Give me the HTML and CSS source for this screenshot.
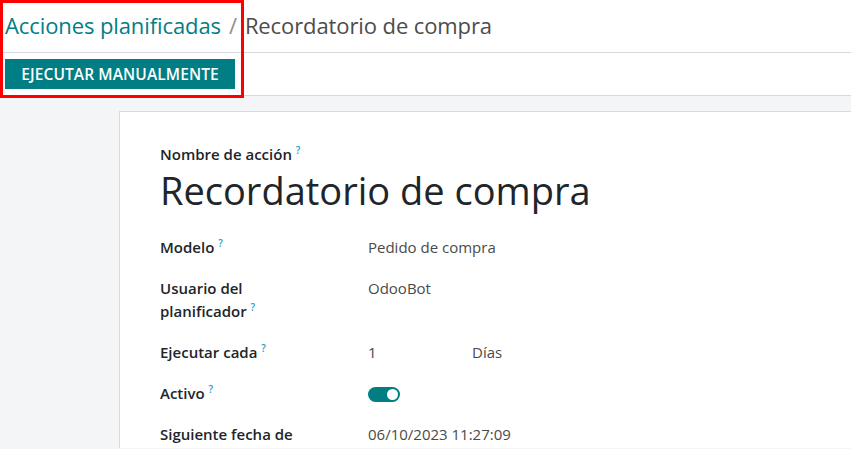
FILE: index.html
```html
<!DOCTYPE html>
<html lang="es">
<head>
    <meta charset="UTF-8">
    <title>Recordatorio de compra</title>
    <link rel="stylesheet" href="styles.css">
</head>
<body>

<div class="control-panel">
    <div class="breadcrumb">
        <a class="crumb-link" href="#">Acciones planificadas</a>
        <span class="crumb-sep">/</span>
        <span class="crumb-current">Recordatorio de compra</span>
    </div>
    <div class="cp-buttons">
        <button class="btn-run">EJECUTAR MANUALMENTE</button>
    </div>
    <!-- marco rojo de resaltado -->
    <div class="highlight"></div>
</div>

<div class="form-view">
    <div class="sheet">
        <div class="name-label">Nombre de acción <sup class="help">?</sup></div>
        <h1 class="record-title">Recordatorio de compra</h1>

        <div class="fields">
            <div class="f-label">Modelo <sup class="help">?</sup></div>
            <div class="f-value">Pedido de compra</div>

            <div class="f-label">Usuario del<br>planificador <sup class="help">?</sup></div>
            <div class="f-value">OdooBot</div>

            <div class="f-label">Ejecutar cada <sup class="help">?</sup></div>
            <div class="f-value interval">
                <span class="interval-num">1</span>
                <span>Días</span>
            </div>

            <div class="f-label">Activo <sup class="help">?</sup></div>
            <div class="f-value"><span class="toggle"><span class="knob"></span></span></div>

            <div class="f-label">Siguiente fecha de</div>
            <div class="f-value">06/10/2023 11:27:09</div>
        </div>
    </div>
</div>

</body>
</html>
```

FILE: styles.css
```css
body {
    margin: 0;
    padding: 0;
    font-family: "Open Sans", "Noto Sans", sans-serif;
    background-color: #f4f5f7;
    color: #212529;
    height: 100vh;
    overflow: hidden;
}
.control-panel {
    position: relative;
    background-color: white;
    border-bottom: 1px solid #d8dadd;
}
.breadcrumb {
    height: 53px;
    display: flex;
    align-items: center;
    padding: 0 0 3px 5px;
    box-sizing: border-box;
    font-size: 22px;
    border-bottom: 1px solid #d8dadd;
    letter-spacing: -0.1px;
}
.crumb-link {
    color: #017e84;
    text-decoration: none;
}
.crumb-sep {
    color: #8f8f8f;
    margin: 0 8px;
}
.crumb-current {
    color: #4c4c4c;
}
.cp-buttons {
    height: 42px;
    padding: 6px 0 0 5px;
    box-sizing: border-box;
}
.btn-run {
    background-color: #017e84;
    color: white;
    border: none;
    height: 30px;
    width: 230px;
    padding: 0;
    font-family: inherit;
    font-size: 15.5px;
    font-weight: 600;
    letter-spacing: 0.1px;
}
.highlight {
    position: absolute;
    left: 0;
    top: 0;
    width: 238px;
    height: 92px;
    border: 3px solid #ff0000;
}
.form-view {
    height: calc(100vh - 97px);
    overflow: hidden;
    padding: 15px 0 0 119px;
    box-sizing: border-box;
}
.sheet {
    background-color: white;
    border: 1px solid #d8dadd;
    border-right: none;
    min-height: 400px;
    padding: 32px 40px;
}
.name-label {
    font-size: 15px;
    font-weight: 600;
    line-height: 20px;
}
.help {
    color: #1f9cc7;
    font-size: 10px;
    font-weight: 600;
    vertical-align: top;
    position: relative;
    top: -4px;
}
.record-title {
    margin: 0;
    font-size: 38px;
    font-weight: 400;
    line-height: 52px;
}
.fields {
    display: grid;
    grid-template-columns: 208px 300px;
    row-gap: 18px;
    margin-top: 20px;
    font-size: 15px;
    line-height: 23px;
}
.f-label {
    font-weight: 600;
}
.f-value {
    color: #4a4a4a;
}
.interval {
    display: flex;
}
.interval-num {
    width: 104px;
}
.toggle {
    display: inline-flex;
    align-items: center;
    justify-content: flex-end;
    width: 32px;
    height: 15px;
    border-radius: 8px;
    background-color: #017e84;
    padding-right: 2px;
    box-sizing: border-box;
    vertical-align: middle;
}
.knob {
    width: 11px;
    height: 11px;
    border-radius: 50%;
    background-color: white;
}
```
